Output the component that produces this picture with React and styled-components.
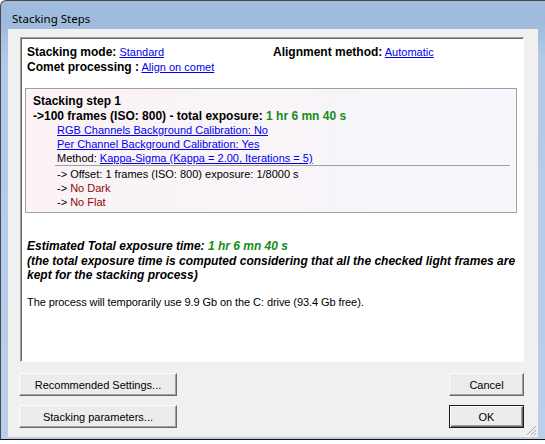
import React from "react";
import styled, { createGlobalStyle } from "styled-components";

const GlobalStyle = createGlobalStyle`
  body {
    margin: 0;
    background: #ffffff;
    font-family: "Liberation Sans", Arial, sans-serif;
  }
`;

const Window = styled.div`
  width: 545px;
  height: 440px;
  box-sizing: border-box;
  display: flex;
  flex-direction: column;
  padding: 0 7px 2px 7px;
  border-top: 1px solid #4a4a4a;
  border-left: 1px solid #4a4a4a;
  border-bottom: 1px solid #111;
  border-top-left-radius: 6px;
  background: linear-gradient(to bottom, #a2bcdd 0, #9fbadc 20px, #b3cae7 60px, #b9cfea 100%);
`;

const TitleBar = styled.div`
  height: 28px;
  display: flex;
  align-items: flex-end;
  padding: 0 0 3px 4px;
  box-sizing: border-box;
  font-family: "Noto Sans", "Open Sans", sans-serif;
  font-size: 11.5px;
  color: #000;
`;

const Client = styled.div`
  flex: 1;
  position: relative;
  display: flex;
  flex-direction: column;
  background: #f0f0f0;
  padding: 8px 14px 9px 11px;
  font-size: 11px;
  color: #000;
`;

const Panel = styled.div`
  height: 325px;
  box-sizing: border-box;
  margin-left: 1px;
  background: #fff;
  border: 1px solid;
  border-color: #a0a0a0 #fdfdfd #fdfdfd #a0a0a0;
  box-shadow: inset 1px 1px 0 #696969;
  padding: 7px 6px 0 6px;
`;

const InfoGrid = styled.div`
  display: grid;
  grid-template-columns: 246px auto;
  line-height: 15px;
`;

const Label = styled.span`
  font-weight: bold;
  font-size: 12px;
`;

const Link = styled.a`
  color: #0000ee;
  text-decoration: underline;
  cursor: pointer;
`;

const StepBox = styled.div`
  margin: 13px 0 0 -2px;
  height: 125px;
  box-sizing: border-box;
  border: 1px solid #a0a0a0;
  background: linear-gradient(to right, #fbf3f5, #f6f6fc);
  padding: 5px 6px 0 7px;
`;

const StepTitle = styled.div`
  font-weight: bold;
  font-size: 12px;
  line-height: 15px;
`;

const FramesLine = styled.div`
  font-weight: bold;
  font-size: 12px;
  line-height: 14px;
`;

const Green = styled.span`
  color: #168c16;
`;

const Indented = styled.div`
  margin-left: 24px;
  line-height: 14px;
`;

const Separator = styled.div`
  margin: 0 0 1px 22px;
  border-top: 1px solid #a0a0a0;
`;

const Missing = styled.span`
  color: #8b0a0a;
`;

const Estimate = styled.div`
  margin-top: 26px;
  font-weight: bold;
  font-style: italic;
  font-size: 12px;
  line-height: 14.5px;
`;

const DiskNote = styled.div`
  margin-top: 12.5px;
  line-height: 14px;
  letter-spacing: -0.08px;
`;

const Footer = styled.div`
  margin-top: 11px;
  display: flex;
  justify-content: space-between;
`;

const ButtonColumn = styled.div`
  display: flex;
  flex-direction: column;
  gap: 9px;
`;

const Button = styled.button`
  width: ${(p) => p.$width}px;
  height: 23px;
  box-sizing: border-box;
  padding: 0;
  font-family: "Liberation Sans", Arial, sans-serif;
  font-size: 11px;
  color: #000;
  background: #ececec;
  border: 1px solid;
  border-color: ${(p) => (p.$default ? "#1a1a1a" : "#fdfdfd #696969 #696969 #fdfdfd")};
  box-shadow: ${(p) =>
    p.$default
      ? "inset 1px 1px 0 #fdfdfd, inset -1px -1px 0 #696969, inset -2px -2px 0 #a0a0a0"
      : "inset -1px -1px 0 #a0a0a0"};
`;

const Grip = styled.svg`
  position: absolute;
  right: 1px;
  bottom: 1px;
`;

export default function App() {
  return (
    <>
      <GlobalStyle />
      <Window>
        <TitleBar>Stacking Steps</TitleBar>
        <Client>
          <Panel>
            <InfoGrid>
              <div>
                <Label>Stacking mode:</Label> <Link>Standard</Link>
              </div>
              <div>
                <Label>Alignment method:</Label> <Link>Automatic</Link>
              </div>
              <div>
                <Label>Comet processing :</Label> <Link>Align on comet</Link>
              </div>
            </InfoGrid>

            <StepBox>
              <StepTitle>Stacking step 1</StepTitle>
              <FramesLine>
                -&gt;100 frames (ISO: 800) - total exposure: <Green>1 hr 6 mn 40 s</Green>
              </FramesLine>
              <Indented>
                <Link>RGB Channels Background Calibration: No</Link>
              </Indented>
              <Indented>
                <Link>Per Channel Background Calibration: Yes</Link>
              </Indented>
              <Indented>
                Method: <Link>Kappa-Sigma (Kappa = 2.00, Iterations = 5)</Link>
              </Indented>
              <Separator />
              <Indented>-&gt; Offset: 1 frames (ISO: 800) exposure: 1/8000 s</Indented>
              <Indented>
                -&gt; <Missing>No Dark</Missing>
              </Indented>
              <Indented>
                -&gt; <Missing>No Flat</Missing>
              </Indented>
            </StepBox>

            <Estimate>
              Estimated Total exposure time: <Green>1 hr 6 mn 40 s</Green>
              <br />
              (the total exposure time is computed considering that all the checked light frames are
              kept for the stacking process)
            </Estimate>

            <DiskNote>The process will temporarily use 9.9 Gb on the C: drive (93.4 Gb free).</DiskNote>
          </Panel>

          <Footer>
            <ButtonColumn>
              <Button $width={158}>Recommended Settings...</Button>
              <Button $width={158}>Stacking parameters...</Button>
            </ButtonColumn>
            <ButtonColumn>
              <Button $width={75}>Cancel</Button>
              <Button $width={75} $default>
                OK
              </Button>
            </ButtonColumn>
          </Footer>

          <Grip width="11" height="11" viewBox="0 0 11 11">
            <g stroke="#a8a8a8" strokeWidth="1">
              <line x1="10" y1="1" x2="1" y2="10" />
              <line x1="10" y1="5" x2="5" y2="10" />
              <line x1="10" y1="8" x2="8" y2="10" />
            </g>
          </Grip>
        </Client>
      </Window>
    </>
  );
}
